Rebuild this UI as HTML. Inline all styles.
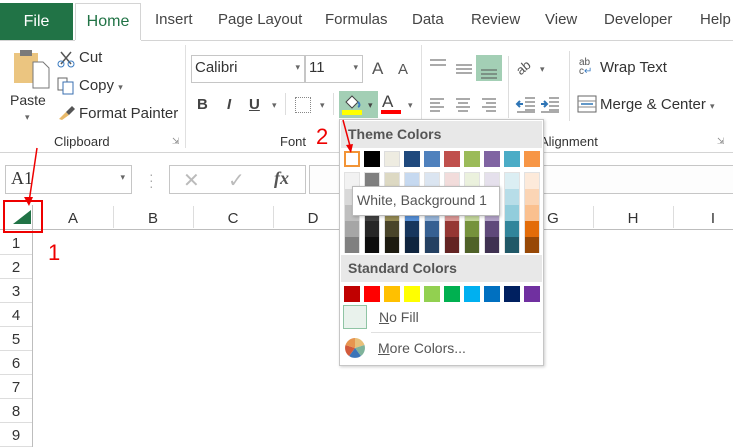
<!DOCTYPE html>
<html><head><meta charset="utf-8"><style>
*{margin:0;padding:0;box-sizing:border-box}
body{width:733px;height:447px;overflow:hidden;background:#fff;font-family:"Segoe UI","Liberation Sans","DejaVu Sans",sans-serif;color:#333;position:relative}
.a{position:absolute}
.t{font-size:15px;color:#444;top:11px;position:absolute}
.sw{position:absolute;width:16px;height:16px}
.col{position:absolute;width:16px;top:172px;height:81px;border:1px solid #e2e2e2}
.col div{height:16px}
.ch{position:absolute;top:210px;font-size:15px;color:#333;width:80px;text-align:center}
.rh{position:absolute;left:0;width:32px;text-align:center;font-size:15px;color:#333}
</style></head><body>
<div class="a" style="left:0;top:3px;width:73px;height:37px;background:#217346;color:#fff;font-size:16px;text-align:center;line-height:37px">File</div>
<div class="a" style="left:75px;top:3px;width:66px;height:38px;border:1px solid #d4d4d4;border-bottom:none;background:#fff;color:#217346;font-size:16px;text-align:center;line-height:36px">Home</div>
<div class="a" style="left:0;top:40px;width:733px;height:1px;background:#d4d4d4"></div>
<div class="a" style="left:75px;top:40px;width:66px;height:1px;background:#fff"></div>
<span class="t" style="left:155px">Insert</span>
<span class="t" style="left:218px">Page Layout</span>
<span class="t" style="left:325px">Formulas</span>
<span class="t" style="left:412px">Data</span>
<span class="t" style="left:471px">Review</span>
<span class="t" style="left:545px">View</span>
<span class="t" style="left:604px">Developer</span>
<span class="t" style="left:700px">Help</span>
<div class="a" style="left:0;top:152px;width:733px;height:1px;background:#d4d4d4"></div>
<svg class="a" style="left:12px;top:48px" width="38" height="42"><rect x="2" y="5" width="24" height="30" fill="#EBC580"/><rect x="8" y="2" width="12" height="6" fill="#7a7a7a"/><path d="M21 14h10l6 6v20H21z" fill="#fff" stroke="#777"/></svg>
<div class="a" style="left:10px;top:92px;font-size:14px">Paste</div>
<div class="a" style="left:25px;top:112px;font-size:9px;color:#666">▾</div>
<svg class="a" style="left:57px;top:50px" width="18" height="18"><path d="M4 2l10 12M14 2L4 14" stroke="#555" stroke-width="1.5"/><circle cx="4" cy="14" r="3" fill="none" stroke="#3a7bc0"/><circle cx="14" cy="14" r="3" fill="none" stroke="#3a7bc0"/></svg>
<div class="a" style="left:79px;top:49px;font-size:15px">Cut</div>
<svg class="a" style="left:57px;top:77px" width="18" height="18"><rect x="1" y="1" width="9" height="12" fill="#fff" stroke="#666"/><rect x="6" y="5" width="10" height="12" fill="#fff" stroke="#3a6fb0"/></svg>
<div class="a" style="left:79px;top:77px;font-size:15px">Copy <span style="font-size:9px;color:#666">▾</span></div>
<svg class="a" style="left:57px;top:105px" width="18" height="16"><path d="M2 14l7-7 3 3-7 5z" fill="#E8B96A"/><path d="M9 7l6-6 3 3-6 6z" fill="#555"/></svg>
<div class="a" style="left:79px;top:105px;font-size:15px">Format Painter</div>
<div class="a" style="left:54px;top:134px;font-size:13px">Clipboard</div>
<div class="a" style="left:172px;top:136px;font-size:9px;color:#888">⇲</div>
<div class="a" style="left:185px;top:45px;width:1px;height:103px;background:#e0e0e0"></div>
<div class="a" style="left:191px;top:55px;width:114px;height:28px;border:1px solid #c6c6c6;font-size:15px;padding:3px 3px">Calibri<span style="position:absolute;right:4px;top:6px;font-size:9px;color:#666">▾</span></div>
<div class="a" style="left:305px;top:55px;width:58px;height:28px;border:1px solid #c6c6c6;font-size:15px;padding:3px 3px">11<span style="position:absolute;right:4px;top:6px;font-size:9px;color:#666">▾</span></div>
<div class="a" style="left:372px;top:59px;font-size:17px;color:#555">A</div>
<div class="a" style="left:398px;top:61px;font-size:15px;color:#555">A</div>
<div class="a" style="left:197px;top:96px;font-size:15px;font-weight:bold;color:#444">B</div>
<div class="a" style="left:227px;top:96px;font-size:15px;font-style:italic;font-weight:bold;color:#444">I</div>
<div class="a" style="left:249px;top:96px;font-size:15px;font-weight:bold;text-decoration:underline;color:#444">U</div>
<div class="a" style="left:272px;top:100px;font-size:9px;color:#666">▾</div>
<div class="a" style="left:285px;top:93px;width:1px;height:22px;background:#ddd"></div>
<div class="a" style="left:295px;top:97px;width:16px;height:16px;border:1px dotted #888"></div>
<div class="a" style="left:320px;top:100px;font-size:9px;color:#666">▾</div>
<div class="a" style="left:333px;top:93px;width:1px;height:22px;background:#ddd"></div>
<div class="a" style="left:339px;top:91px;width:39px;height:27px;background:#a3cfb5"></div>
<svg class="a" style="left:342px;top:93px" width="20" height="18"><path d="M4 9l6-6 6 6-6 6z" fill="#fff" stroke="#444"/><path d="M16 9c2 2 2 4 0 5" stroke="#3a7bc0" stroke-width="2" fill="none"/></svg>
<div class="a" style="left:342px;top:110px;width:20px;height:5px;background:#ff0"></div>
<div class="a" style="left:368px;top:100px;font-size:9px;color:#444">▾</div>
<div class="a" style="left:382px;top:92px;font-size:17px;color:#444">A</div>
<div class="a" style="left:381px;top:110px;width:20px;height:4px;background:#f00"></div>
<div class="a" style="left:408px;top:100px;font-size:9px;color:#666">▾</div>
<div class="a" style="left:280px;top:134px;font-size:13px">Font</div>
<div class="a" style="left:316px;top:124px;font-size:22px;color:#e00">2</div>
<div class="a" style="left:421px;top:45px;width:1px;height:103px;background:#e0e0e0"></div>
<svg class="a" style="left:428px;top:55px" width="80" height="70" stroke="#555">
<path d="M2 5h16M2 10h16"/><path d="M28 10h16M28 14h16M28 18h16"/>
<rect x="48" y="0" width="26" height="26" fill="#a3cfb5" stroke="none"/><path d="M53 15h16M53 19h16M53 23h16"/>
<path d="M2 44h14M2 48h10M2 52h14M2 56h10"/><path d="M28 44h14M30 48h10M28 52h14M30 56h10"/><path d="M54 44h14M58 48h10M54 52h14M58 56h10"/>
</svg>
<div class="a" style="left:508px;top:56px;width:1px;height:62px;background:#ddd"></div>
<div class="a" style="left:516px;top:60px;font-size:13px;color:#555;transform:rotate(-40deg)">ab</div>
<div class="a" style="left:540px;top:64px;font-size:9px;color:#666">▾</div>
<svg class="a" style="left:515px;top:96px" width="50" height="18"><path d="M2 8h6M5 5l-3 3 3 3" stroke="#2e75b6" stroke-width="2" fill="none"/><path d="M10 2h10M10 6h10M10 10h10M10 14h10M2 16h18" stroke="#555"/><path d="M26 8h6M29 5l3 3-3 3" stroke="#2e75b6" stroke-width="2" fill="none"/><path d="M34 2h10M34 6h10M34 10h10M34 14h10M26 16h18" stroke="#555"/></svg>
<div class="a" style="left:569px;top:51px;width:1px;height:70px;background:#ddd"></div>
<div class="a" style="left:579px;top:58px;font-size:10px;line-height:9px;color:#555">ab<br>c<span style="color:#3a7bc0">↵</span></div>
<div class="a" style="left:600px;top:59px;font-size:15px">Wrap Text</div>
<svg class="a" style="left:577px;top:95px" width="20" height="18"><rect x="1" y="1" width="18" height="16" fill="none" stroke="#666"/><path d="M1 6h18M1 12h18" stroke="#888"/><path d="M4 9h12" stroke="#2e75b6" stroke-width="1.5"/></svg>
<div class="a" style="left:600px;top:96px;font-size:15px">Merge &amp; Center <span style="font-size:9px;color:#666">▾</span></div>
<div class="a" style="left:540px;top:134px;font-size:13px">Alignment</div>
<div class="a" style="left:717px;top:136px;font-size:9px;color:#888">⇲</div>
<div class="a" style="left:5px;top:165px;width:127px;height:29px;border:1px solid #c6c6c6;font-family:'Liberation Serif',serif;font-size:18px;padding:2px 5px;color:#333">A1<span style="position:absolute;right:6px;top:6px;font-size:9px;color:#666;font-family:sans-serif">▾</span></div>
<div class="a" style="left:149px;top:171px;font-size:14px;color:#aaa;line-height:6px">·<br>·<br>·</div>
<div class="a" style="left:169px;top:165px;width:137px;height:29px;border:1px solid #c6c6c6"></div>
<div class="a" style="left:183px;top:168px;font-size:20px;color:#bbb">✕</div>
<div class="a" style="left:228px;top:168px;font-size:20px;color:#bbb">✓</div>
<div class="a" style="left:274px;top:168px;font-family:'Liberation Serif',serif;font-style:italic;font-weight:bold;font-size:18px;color:#555">fx</div>
<div class="a" style="left:309px;top:165px;width:430px;height:29px;border:1px solid #c6c6c6;background:#fdfdfd"></div>
<div class="a" style="left:0;top:229px;width:733px;height:1px;background:#bdbdbd"></div>
<div class="a" style="left:32px;top:205px;width:1px;height:242px;background:#bdbdbd"></div>
<div class="a" style="left:113px;top:206px;width:1px;height:22px;background:#ddd"></div>
<div class="a" style="left:193px;top:206px;width:1px;height:22px;background:#ddd"></div>
<div class="a" style="left:273px;top:206px;width:1px;height:22px;background:#ddd"></div>
<div class="a" style="left:593px;top:206px;width:1px;height:22px;background:#ddd"></div>
<div class="a" style="left:673px;top:206px;width:1px;height:22px;background:#ddd"></div>
<div class="ch" style="left:33px">A</div><div class="ch" style="left:113px">B</div><div class="ch" style="left:193px">C</div><div class="ch" style="left:273px">D</div><div class="ch" style="left:513px">G</div><div class="ch" style="left:593px">H</div><div class="ch" style="left:673px">I</div>
<svg class="a" style="left:12px;top:209px" width="20" height="16"><path d="M1 15h18V1z" fill="#217346"/></svg>
<div class="a" style="left:3px;top:200px;width:40px;height:33px;border:2px solid #e00"></div>
<svg class="a" style="left:0;top:140px" width="50" height="70"><path d="M37 8L29 62" stroke="#e00" stroke-width="1.5"/><path d="M24 57l5 9 4-9z" fill="#e00"/></svg>
<div class="a" style="left:48px;top:240px;font-size:22px;color:#e00">1</div>
<div class="rh" style="top:235px">1</div><div class="a" style="left:0;top:254px;width:32px;height:1px;background:#ddd"></div>
<div class="rh" style="top:259px">2</div><div class="a" style="left:0;top:278px;width:32px;height:1px;background:#ddd"></div>
<div class="rh" style="top:283px">3</div><div class="a" style="left:0;top:302px;width:32px;height:1px;background:#ddd"></div>
<div class="rh" style="top:307px">4</div><div class="a" style="left:0;top:326px;width:32px;height:1px;background:#ddd"></div>
<div class="rh" style="top:331px">5</div><div class="a" style="left:0;top:350px;width:32px;height:1px;background:#ddd"></div>
<div class="rh" style="top:355px">6</div><div class="a" style="left:0;top:374px;width:32px;height:1px;background:#ddd"></div>
<div class="rh" style="top:379px">7</div><div class="a" style="left:0;top:398px;width:32px;height:1px;background:#ddd"></div>
<div class="rh" style="top:403px">8</div><div class="a" style="left:0;top:422px;width:32px;height:1px;background:#ddd"></div>
<div class="rh" style="top:427px">9</div><div class="a" style="left:0;top:446px;width:32px;height:1px;background:#ddd"></div>
<div class="a" style="left:339px;top:119px;width:205px;height:247px;background:#fff;border:1px solid #c6c6c6;box-shadow:1px 1px 3px rgba(0,0,0,.2)"></div>
<div class="a" style="left:341px;top:121px;width:201px;height:27px;background:#e8e8e8;font-weight:bold;font-size:14px;color:#555;padding:5px 7px">Theme Colors</div>
<div class="sw" style="left:344px;top:151px;border:2px solid #f29436;background:#fff"></div>
<div class="sw" style="left:364px;top:151px;background:#000"></div>
<div class="sw" style="left:384px;top:151px;background:#EEECE1;border:1px solid #ddd"></div>
<div class="sw" style="left:404px;top:151px;background:#1F497D"></div>
<div class="sw" style="left:424px;top:151px;background:#4F81BD"></div>
<div class="sw" style="left:444px;top:151px;background:#C0504D"></div>
<div class="sw" style="left:464px;top:151px;background:#9BBB59"></div>
<div class="sw" style="left:484px;top:151px;background:#8064A2"></div>
<div class="sw" style="left:504px;top:151px;background:#4BACC6"></div>
<div class="sw" style="left:524px;top:151px;background:#F79646"></div>
<div class="col" style="left:344px"><div style="background:#F2F2F2"></div><div style="background:#D9D9D9"></div><div style="background:#BFBFBF"></div><div style="background:#A6A6A6"></div><div style="background:#808080"></div></div>
<div class="col" style="left:364px"><div style="background:#7F7F7F"></div><div style="background:#595959"></div><div style="background:#404040"></div><div style="background:#262626"></div><div style="background:#0D0D0D"></div></div>
<div class="col" style="left:384px"><div style="background:#DDD9C3"></div><div style="background:#C4BD97"></div><div style="background:#938953"></div><div style="background:#494429"></div><div style="background:#1D1B10"></div></div>
<div class="col" style="left:404px"><div style="background:#C6D9F0"></div><div style="background:#8DB3E2"></div><div style="background:#548DD4"></div><div style="background:#17365D"></div><div style="background:#0F243E"></div></div>
<div class="col" style="left:424px"><div style="background:#DBE5F1"></div><div style="background:#B8CCE4"></div><div style="background:#95B3D7"></div><div style="background:#366092"></div><div style="background:#244061"></div></div>
<div class="col" style="left:444px"><div style="background:#F2DCDB"></div><div style="background:#E5B9B7"></div><div style="background:#D99694"></div><div style="background:#953734"></div><div style="background:#632423"></div></div>
<div class="col" style="left:464px"><div style="background:#EBF1DD"></div><div style="background:#D7E3BC"></div><div style="background:#C3D69B"></div><div style="background:#76923C"></div><div style="background:#4F6128"></div></div>
<div class="col" style="left:484px"><div style="background:#E5E0EC"></div><div style="background:#CCC1D9"></div><div style="background:#B2A2C7"></div><div style="background:#5F497A"></div><div style="background:#3F3151"></div></div>
<div class="col" style="left:504px"><div style="background:#DBEEF3"></div><div style="background:#B7DDE8"></div><div style="background:#92CDDC"></div><div style="background:#31859B"></div><div style="background:#205867"></div></div>
<div class="col" style="left:524px"><div style="background:#FDEADA"></div><div style="background:#FBD5B5"></div><div style="background:#FAC08F"></div><div style="background:#E36C09"></div><div style="background:#974806"></div></div>
<div class="a" style="left:352px;top:186px;width:148px;height:30px;background:#fff;border:1px solid #bbb;box-shadow:1px 1px 3px rgba(0,0,0,.2);font-size:14px;color:#555;padding:5px 4px;white-space:nowrap">White, Background 1</div>
<div class="a" style="left:341px;top:255px;width:201px;height:27px;background:#e8e8e8;font-weight:bold;font-size:14px;color:#555;padding:5px 7px">Standard Colors</div>
<div class="sw" style="left:344px;top:286px;background:#C00000"></div>
<div class="sw" style="left:364px;top:286px;background:#FF0000"></div>
<div class="sw" style="left:384px;top:286px;background:#FFC000"></div>
<div class="sw" style="left:404px;top:286px;background:#FFFF00"></div>
<div class="sw" style="left:424px;top:286px;background:#92D050"></div>
<div class="sw" style="left:444px;top:286px;background:#00B050"></div>
<div class="sw" style="left:464px;top:286px;background:#00B0F0"></div>
<div class="sw" style="left:484px;top:286px;background:#0070C0"></div>
<div class="sw" style="left:504px;top:286px;background:#002060"></div>
<div class="sw" style="left:524px;top:286px;background:#7030A0"></div>
<div class="a" style="left:343px;top:305px;width:24px;height:24px;background:#e9f2ec;border:1px solid #8fc4a4"></div>
<div class="a" style="left:379px;top:309px;font-size:14px;color:#555"><u>N</u>o Fill</div>
<div class="a" style="left:371px;top:332px;width:170px;height:1px;background:#e0e0e0"></div>
<svg class="a" style="left:344px;top:337px" width="22" height="22" viewBox="-11 -11 22 22"><path d="M0 0L0-10A10 10 0 0 1 9.5-3z" fill="#E8C07A"/><path d="M0 0L9.5-3A10 10 0 0 1 5.9 8z" fill="#7fb39b"/><path d="M0 0L5.9 8A10 10 0 0 1-5.9 8z" fill="#3b74b8"/><path d="M0 0L-5.9 8A10 10 0 0 1-9.5-3z" fill="#d25a3b"/><path d="M0 0L-9.5-3A10 10 0 0 1 0-10z" fill="#e7954f"/></svg>
<div class="a" style="left:378px;top:340px;font-size:14px;color:#555"><u>M</u>ore Colors...</div>
<svg class="a" style="left:338px;top:118px" width="20" height="40"><path d="M5 2L12 28" stroke="#e00" stroke-width="1.5"/><path d="M8 27l5 8 2-9z" fill="#e00"/></svg>
</body></html>
